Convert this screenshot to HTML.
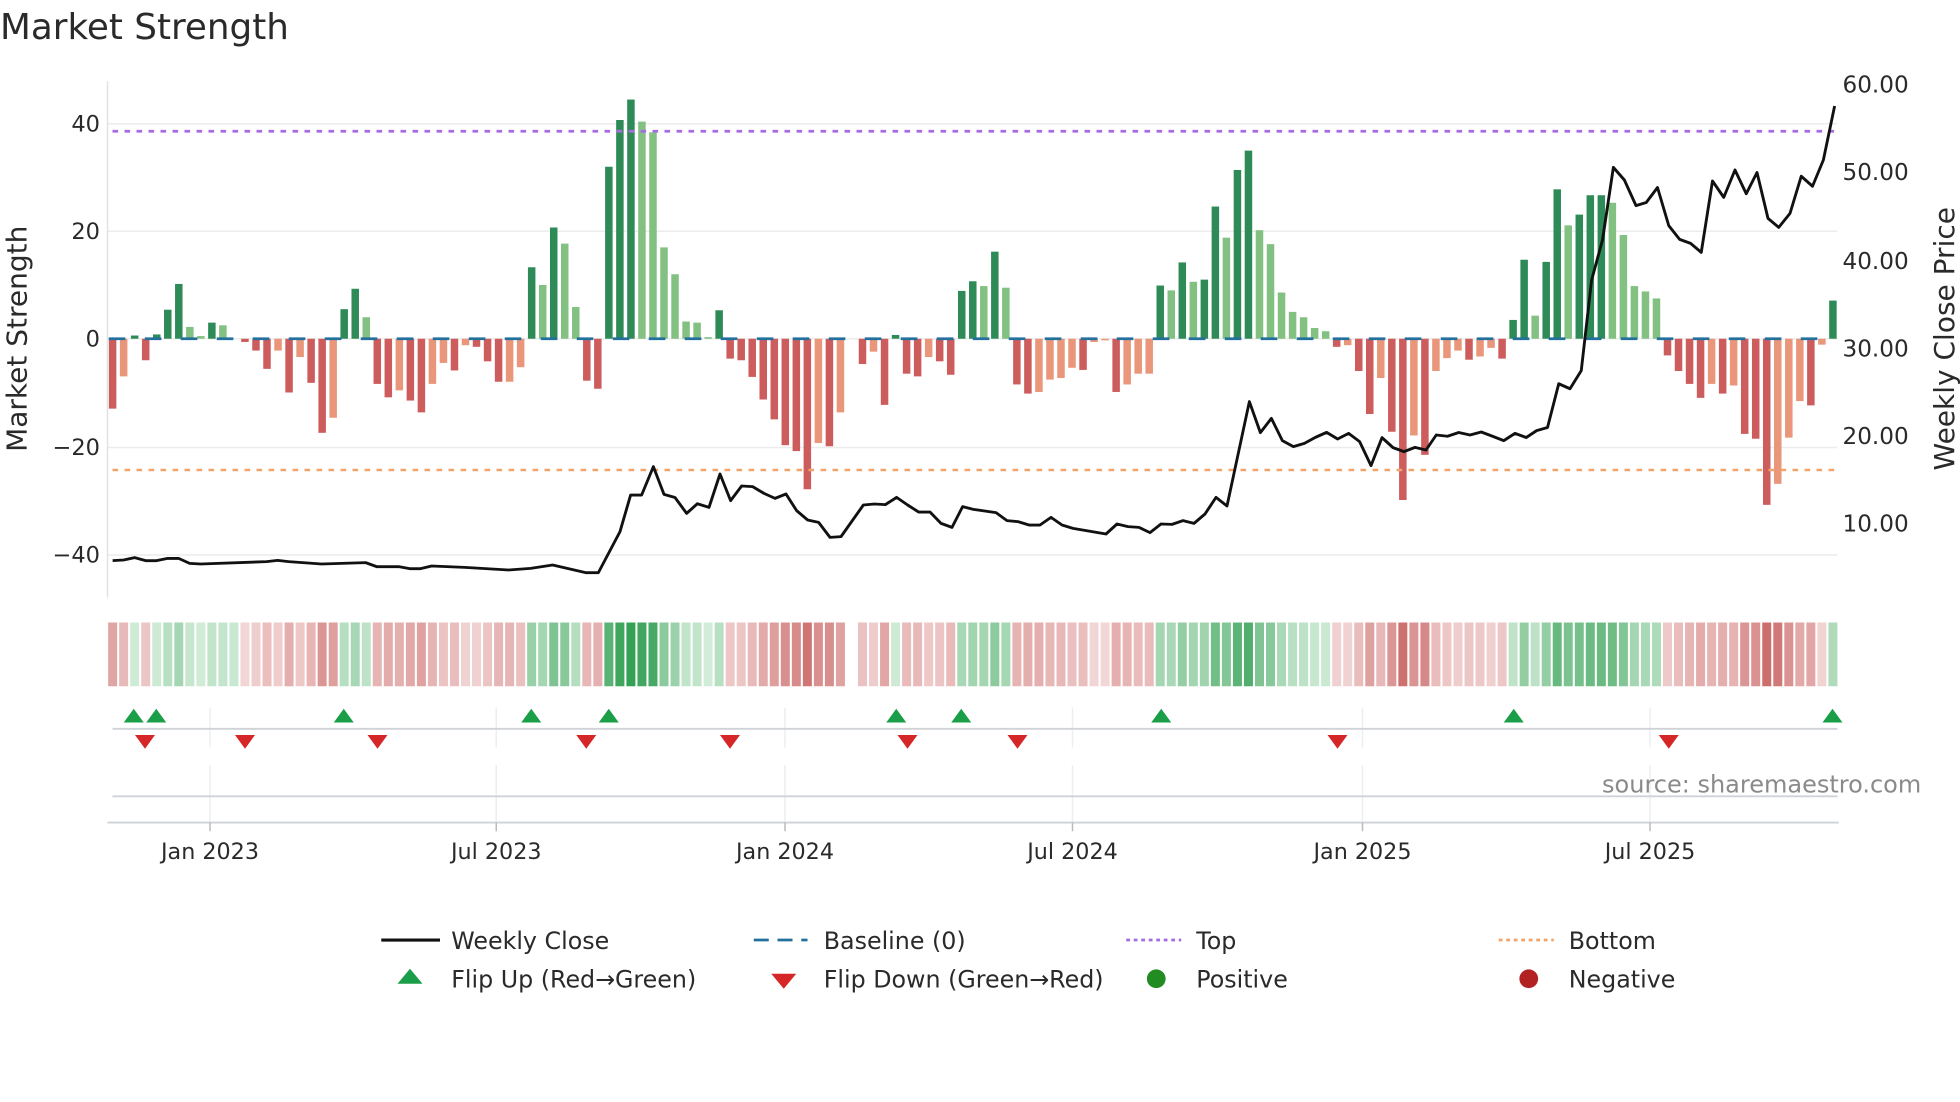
<!DOCTYPE html>
<html><head><meta charset="utf-8"><style>
html,body{margin:0;padding:0;background:#fff;overflow:hidden}
svg{display:block}
text{font-family:"DejaVu Sans","Liberation Sans",sans-serif;fill:#2a2a2a}
</style></head><body>
<svg id="s" width="1960" height="1102" viewBox="0 0 1568 881.6" preserveAspectRatio="none" xmlns="http://www.w3.org/2000/svg">
<rect width="1568" height="881.6" fill="#fff"/>
<text x="0" y="31" font-size="28.6">Market Strength</text>
<g id="grid" stroke="#ececec" stroke-width="1.2">
<line x1="86" x2="1470" y1="99" y2="99"/><line x1="86" x2="1470" y1="185" y2="185"/>
<line x1="86" x2="1470" y1="271" y2="271"/><line x1="86" x2="1470" y1="358" y2="358"/>
<line x1="86" x2="1470" y1="444" y2="444"/>
</g>
<line x1="86" x2="86" y1="65" y2="478" stroke="#e2e2e2" stroke-width="1.2"/>
<g font-size="18" text-anchor="end">
<text x="80" y="105">40</text><text x="80" y="191">20</text><text x="80" y="277">0</text>
<text x="80" y="364">−20</text><text x="80" y="450">−40</text>
</g>
<g font-size="18.5">
<text x="1474" y="74">60.00</text><text x="1474" y="144">50.00</text><text x="1474" y="215">40.00</text>
<text x="1474" y="285">30.00</text><text x="1474" y="355">20.00</text><text x="1474" y="425">10.00</text>
</g>
<text font-size="22.4" text-anchor="middle" transform="translate(21,271) rotate(-90)">Market Strength</text>
<text font-size="22.4" text-anchor="middle" transform="translate(1563,271) rotate(-90)">Weekly Close Price</text>
<g id="bars"></g>
<line x1="90" x2="1468" y1="271" y2="271" stroke="#23709f" stroke-width="2.2" stroke-dasharray="13.3 15.5" transform="translate(-3,0)"/>
<line x1="90" x2="1468" y1="105" y2="105" stroke="#a56be3" stroke-width="2.2" stroke-dasharray="4.5 5.1"/>
<line x1="90" x2="1468" y1="376" y2="376" stroke="#f2a46a" stroke-width="2" stroke-dasharray="4.5 5.1"/>
<polyline id="price" fill="none" stroke="#111" stroke-width="2.3" stroke-linejoin="round"/>
<g id="strip"></g>
<g stroke="#eceef2" stroke-width="1.2">
<line x1="168" x2="168" y1="566" y2="598"/><line x1="397" x2="397" y1="566" y2="598"/>
<line x1="628" x2="628" y1="566" y2="598"/><line x1="858" x2="858" y1="566" y2="598"/>
<line x1="1090" x2="1090" y1="566" y2="598"/><line x1="1320" x2="1320" y1="566" y2="598"/>
<line x1="168" x2="168" y1="612" y2="658"/><line x1="397" x2="397" y1="612" y2="658"/>
<line x1="628" x2="628" y1="612" y2="658"/><line x1="858" x2="858" y1="612" y2="658"/>
<line x1="1090" x2="1090" y1="612" y2="658"/><line x1="1320" x2="1320" y1="612" y2="658"/>
</g>
<line x1="90" x2="1470" y1="583" y2="583" stroke="#cfd2d6" stroke-width="1.5"/>
<line x1="90" x2="1470" y1="637" y2="637" stroke="#cfd2d6" stroke-width="1.5"/>
<line x1="86" x2="1471" y1="658" y2="658" stroke="#cfd2d6" stroke-width="1.5"/>
<g stroke="#bbb" stroke-width="1.2">
<line x1="168" x2="168" y1="658" y2="665"/><line x1="397" x2="397" y1="658" y2="665"/>
<line x1="628" x2="628" y1="658" y2="665"/><line x1="858" x2="858" y1="658" y2="665"/>
<line x1="1090" x2="1090" y1="658" y2="665"/><line x1="1320" x2="1320" y1="658" y2="665"/>
</g>
<g id="marks"></g>
<text x="1537" y="634" font-size="19.2" text-anchor="end" style="fill:#8a8a8a">source: sharemaestro.com</text>
<g font-size="17.8" text-anchor="middle">
<text x="168" y="687">Jan 2023</text><text x="397" y="687">Jul 2023</text><text x="628" y="687">Jan 2024</text>
<text x="858" y="687">Jul 2024</text><text x="1090" y="687">Jan 2025</text><text x="1320" y="687">Jul 2025</text>
</g>
<g font-size="19">
<line x1="305" x2="352" y1="752" y2="752" stroke="#111" stroke-width="2.5"/>
<text x="361" y="759">Weekly Close</text>
<line x1="603" x2="646" y1="752" y2="752" stroke="#23709f" stroke-width="2.2" stroke-dasharray="12 7"/>
<text x="659" y="759">Baseline (0)</text>
<line x1="901" x2="945" y1="752" y2="752" stroke="#a56be3" stroke-width="2.2" stroke-dasharray="3 3"/>
<text x="957" y="759">Top</text>
<line x1="1199" x2="1243" y1="752" y2="752" stroke="#f2a46a" stroke-width="2.2" stroke-dasharray="3 3"/>
<text x="1255" y="759">Bottom</text>
<polygon points="328,775 338,787 318,787" fill="#1a9e48"/>
<text x="361" y="790">Flip Up (Red→Green)</text>
<polygon points="617,779 637,779 627,791" fill="#d62728"/>
<text x="659" y="790">Flip Down (Green→Red)</text>
<circle cx="925" cy="783" r="7.5" fill="#228b22"/>
<text x="957" y="790">Positive</text>
<circle cx="1223" cy="783" r="7.5" fill="#b22222"/>
<text x="1255" y="790">Negative</text>
</g>
</svg>
<script>
var V=[-13,-7,0.6,-4,0.8,5.4,10.2,2.2,0.5,3,2.5,0,-0.6,-2.2,-5.6,-2.2,-10,-3.4,-8.2,-17.5,-14.7,5.5,9.3,4,-8.4,-10.9,-9.6,-11.5,-13.7,-8.4,-4.5,-5.9,-1.2,-1.5,-4.2,-8,-8,-5.3,13.3,10,
20.7,17.7,5.9,-7.8,-9.3,32,40.7,44.5,40.4,38.4,17,12,3.2,3,0.3,5.3,-3.7,-4,-7.1,-11.3,-15,-19.8,-20.9,-28,-19.4,-20,-13.7,0,-4.7,-2.4,-12.3,0.7,-6.5,-7,-3.4,-4.2,-6.7,8.9,10.7,9.8,
16.2,9.5,-8.5,-10.2,-9.9,-7.6,-7.3,-5.4,-5.8,-0.6,-0.3,-9.9,-8.5,-6.5,-6.5,9.9,9,14.2,10.6,11,24.6,18.8,31.4,35,20.2,17.6,8.6,5,4,2,1.4,-1.5,-1.2,-6,-14,-7.3,-17.3,-30,-18,-21.6,
-6,-3.6,-2.2,-3.9,-3.3,-1.7,-3.7,3.5,14.7,4.3,14.3,27.8,21.1,23.1,26.7,26.7,25.3,19.3,9.8,8.8,7.5,-3.1,-6,-8.4,-11,-8.4,-10.2,-8.7,-17.7,-18.6,-30.9,-27,-18.4,-11.6,-12.4,-1.1,7.1];
var NS="http://www.w3.org/2000/svg";
function el(t,a,p){var e=document.createElementNS(NS,t);for(var k in a)e.setAttribute(k,a[k]);p.appendChild(e);return e;}
var bars=document.getElementById('bars'),strip=document.getElementById('strip');
function mix(a,b,t){return 'rgb('+a.map(function(x,i){return Math.round(x+(b[i]-x)*t)}).join(',')+')';}
var prev=0;
for(var k=0;k<V.length;k++){
 var v=V[k],cx=90.1+k*8.822,c;
 if(v>0)c=(v>=prev)?'#2e8b57':'#82c182';else c=(v<prev)?'#cd5c5c':'#e9967a';
 var h=Math.abs(v)*4.3;
 if(v!==0)el('rect',{x:cx-3,y:v>0?271-h:271,width:6,height:h,fill:c},bars);
 prev=v;
 var sv=v; if(k===11)sv=1.5;
 if(sv!==0){var t,col;
  if(sv>0){t=Math.min(1,sv/45);col=mix([212,237,218],[52,160,84],Math.pow(t,0.8));}
  else{t=Math.min(1,-sv/31);col=mix([244,218,218],[204,110,108],Math.pow(t,0.8));}
  el('rect',{x:cx-3.6,y:498,width:7.2,height:51,fill:col},strip);}
}
var P=[[90.1,448.5],[98.9,448],[107.7,446.1],[116.5,448.5],[125.3,448.5],[134.1,446.7],[142.9,446.7],[151.7,450.7],[160.5,451.2],[213.3,449.3],[222.1,448.3],[230.9,449.3],[257.3,451.2],[292.5,450.1],[301.3,453.3],[318.9,453.3],[327.7,454.9],[336.5,454.9],[345.3,452.8],[371.7,453.9],[406.9,456],[424.5,454.7],[442.1,452],[468.5,458.1],[478.7,458.1],[496,425.3],[504.5,396],[513.3,396],[522.7,373.3],[531.2,395.5],[540,398],[549.3,410.7],[557.9,403],[567.2,405.9],[576,379.2],[584.5,400.5],[593.3,388.8],[602.1,389.3],[611.2,394.7],[620,398.7],[628.8,395.2],[637.3,408.5],[646.1,416],[654.9,417.9],[664,429.9],[672.8,429.3],[690.7,404],[699.5,403.2],[708.3,403.7],[717.3,397.9],[726.1,404],[734.9,409.6],[744,409.6],[752.8,418.7],[761.6,421.9],[770.1,405.3],[778.7,407.5],[796.8,410.1],[805.6,416.5],[814.4,417.3],[823.2,420],[832,420],[840.8,413.9],[849.6,420],[858.4,422.7],[884.8,427.2],[893.6,419.2],[902.4,421.3],[911.2,421.9],[920,426.1],[928.8,419.2],[937.6,419.5],[946.4,416.5],[955.2,418.7],[964,411.2],[972.8,397.9],[981.6,404.8],[999.5,321.3],[1008.3,346.1],[1017.1,334.7],[1025.9,352.5],[1034.7,357.3],[1043.5,354.7],[1052.3,349.9],[1061.3,345.9],[1070.1,351.2],[1078.9,346.7],[1087.7,353.3],[1096.8,372.5],[1105.6,350.1],[1114.4,358.1],[1123.2,361.3],[1132,357.9],[1140.8,360],[1149,348],[1158,349],[1167,346],[1176,348],[1185,345.6],[1194,349],[1203,352.5],[1212,346.7],[1221,350],[1229.3,344.5],[1238,342],[1247,307],[1256,311],[1265,296.5],[1273.3,224],[1282,192],[1290.7,133.9],[1299.5,144],[1308.8,164.5],[1317,162],[1326,150],[1335,180.5],[1343.7,191.5],[1352.5,194.7],[1361,201.9],[1370,144.8],[1379,157.9],[1388,136],[1397,155],[1405.6,138],[1414.4,174.7],[1423,181.9],[1432,170.7],[1441,141],[1450,149],[1458.7,128],[1467.7,84.8]];
document.getElementById('price').setAttribute('points',P.map(function(p){return p.join(',')}).join(' '));
var m=document.getElementById('marks');
[107,125,275,425,487,717,769,929,1211,1466].forEach(function(x){el('polygon',{points:(x-8)+',578 '+(x+8)+',578 '+x+',567',fill:'#1a9e48'},m);});
[116,196,302,469,584,726,814,1070,1335].forEach(function(x){el('polygon',{points:(x-8)+',588 '+(x+8)+',588 '+x+',599',fill:'#d62728'},m);});
</script>
</body></html>
